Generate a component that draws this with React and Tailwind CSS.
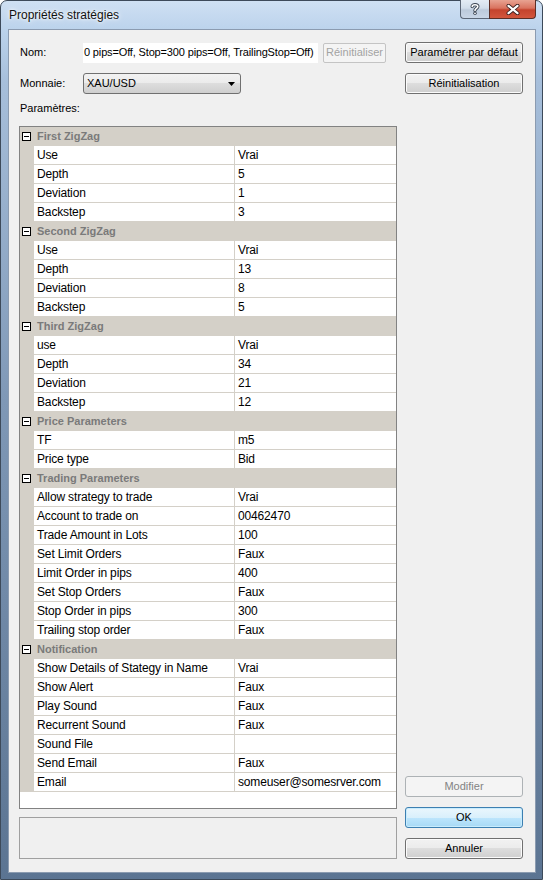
import React from 'react';

const groups = [
  { title: 'First ZigZag', rows: [['Use', 'Vrai'], ['Depth', '5'], ['Deviation', '1'], ['Backstep', '3']] },
  { title: 'Second ZigZag', rows: [['Use', 'Vrai'], ['Depth', '13'], ['Deviation', '8'], ['Backstep', '5']] },
  { title: 'Third ZigZag', rows: [['use', 'Vrai'], ['Depth', '34'], ['Deviation', '21'], ['Backstep', '12']] },
  { title: 'Price Parameters', rows: [['TF', 'm5'], ['Price type', 'Bid']] },
  {
    title: 'Trading Parameters',
    rows: [
      ['Allow strategy to trade', 'Vrai'],
      ['Account to trade on', '00462470'],
      ['Trade Amount in Lots', '100'],
      ['Set Limit Orders', 'Faux'],
      ['Limit Order in pips', '400'],
      ['Set Stop Orders', 'Faux'],
      ['Stop Order in pips', '300'],
      ['Trailing stop order', 'Faux'],
    ],
  },
  {
    title: 'Notification',
    rows: [
      ['Show Details of Stategy in Name', 'Vrai'],
      ['Show Alert', 'Faux'],
      ['Play Sound', 'Faux'],
      ['Recurrent Sound', 'Faux'],
      ['Sound File', ''],
      ['Send Email', 'Faux'],
      ['Email', 'someuser@somesrver.com'],
    ],
  },
];

const btn =
  'flex h-[21px] w-[118px] items-center justify-center rounded-[3px] border border-[#707070] bg-[linear-gradient(180deg,#f2f2f2_0%,#ebebeb_50%,#dddddd_50%,#cfcfcf_100%)] shadow-[inset_0_0_0_1px_#fbfbfb] text-black';

function MinusBox() {
  return (
    <div className="flex h-[9px] w-[9px] items-center justify-center border border-black bg-white">
      <div className="h-[1px] w-[5px] bg-black" />
    </div>
  );
}

function PropertyGrid() {
  return (
    <div className="h-[683px] w-[378px] overflow-hidden border border-[#828282] bg-white text-[12px] tracking-[-0.15px] text-black">
      {groups.map((g) => (
        <div key={g.title}>
          <div className="flex h-[19px] items-center bg-[#d4d0c8]">
            <div className="w-[14px] pl-[2px]">
              <MinusBox />
            </div>
            <span className="pl-[3px] text-[11px] font-bold tracking-normal text-[#7a7a7a]">{g.title}</span>
          </div>
          {g.rows.map(([k, v]) => (
            <div key={k} className="flex h-[19px]">
              <div className="w-[14px] shrink-0 bg-[#d4d0c8]" />
              <div className="flex w-[200px] shrink-0 items-center border-b border-[#d4d0c8] pl-[3px] whitespace-nowrap">{k}</div>
              <div className="flex flex-1 items-center border-b border-l border-[#d4d0c8] pl-[3px] whitespace-nowrap">{v}</div>
            </div>
          ))}
        </div>
      ))}
    </div>
  );
}

export default function App() {
  return (
    <div className="flex h-[880px] w-[543px] flex-col rounded-t-[7px] border border-[#3d4a5a] bg-[linear-gradient(180deg,#cfe0f3_0px,#bcd3ec_28px,#a7bfdb_80px,#7f98b6_400px,#5b7492_879px)] pb-[6px] pl-[7px] pr-[6px] font-['Liberation_Sans',Arial,sans-serif]">
      {/* title bar */}
      <div className="flex h-[28px] shrink-0 items-start justify-between">
        <span className="pl-[1px] pt-[7px] text-[12px] leading-[15px] text-[#111] [text-shadow:0_0_6px_#fff,0_0_3px_#fff]">
          Propriétés stratégies
        </span>
        <div className="-mt-[1px] flex">
          <div className="flex h-[19px] w-[29px] items-center justify-center rounded-bl-[4px] border border-r-0 border-t-0 border-[#5b6676] bg-[linear-gradient(180deg,#e4ecf5_0%,#d2deeb_45%,#bccadb_55%,#c9d6e6_100%)]">
            <svg width="10" height="12" viewBox="0 0 10 12">
              <path d="M2.2 3.6 C2.2 1.2 7.8 1.2 7.8 3.6 C7.8 5.4 5 5.4 5 7.4" fill="none" stroke="#3a4350" strokeWidth="3.4" strokeLinecap="round" />
              <path d="M2.2 3.6 C2.2 1.2 7.8 1.2 7.8 3.6 C7.8 5.4 5 5.4 5 7.4" fill="none" stroke="#fff" strokeWidth="1.6" strokeLinecap="round" />
              <circle cx="5" cy="10.3" r="1.7" fill="#3a4350" />
              <circle cx="5" cy="10.3" r="0.9" fill="#fff" />
            </svg>
          </div>
          <div className="flex h-[19px] w-[47px] items-center justify-center rounded-br-[4px] border border-t-0 border-[#5b2e26] bg-[linear-gradient(180deg,#e8a392_0%,#d9735f_45%,#c4432d_55%,#d2563d_100%)]">
            <svg width="14" height="11" viewBox="0 0 14 11">
              <path d="M2.5 1.8 L11.5 9.2 M11.5 1.8 L2.5 9.2" stroke="#3b2020" strokeWidth="4" strokeLinecap="round" />
              <path d="M2.5 1.8 L11.5 9.2 M11.5 1.8 L2.5 9.2" stroke="#fff" strokeWidth="2.2" strokeLinecap="round" />
            </svg>
          </div>
        </div>
      </div>

      {/* client area */}
      <div className="flex flex-1 flex-col border border-[#8b9bb0] bg-[#f0f0f0] pl-[10px] pt-[12px] text-[11px] text-black">
        <div className="flex h-[21px]">
          <div className="flex w-[378px] items-center">
            <span className="w-[64px] pl-[1px]">Nom:</span>
            <div className="flex h-[20px] w-[235px] items-center overflow-hidden whitespace-nowrap bg-white pl-[1px] tracking-[-0.15px]">
              0 pips=Off, Stop=300 pips=Off, TrailingStop=Off)
            </div>
            <div className="ml-[5px] flex h-[20px] w-[63px] items-center justify-center rounded-[2px] border border-[#c4c4c4] bg-[#f4f4f4] text-[#a3a3a3]">
              Réinitialiser
            </div>
          </div>
          <div className={`ml-[8px] ${btn}`}>Paramétrer par défaut</div>
        </div>

        <div className="mt-[10px] flex h-[21px]">
          <div className="flex w-[378px] items-center">
            <span className="w-[64px] pl-[1px]">Monnaie:</span>
            <div className="flex h-[21px] w-[158px] items-center justify-between rounded-[3px] border border-[#707070] bg-[linear-gradient(180deg,#f2f2f2_0%,#ebebeb_50%,#dddddd_50%,#cfcfcf_100%)] pl-[3px] pr-[5px]">
              <span>XAU/USD</span>
              <svg width="7" height="4" viewBox="0 0 7 4">
                <path d="M0 0 H7 L3.5 4 Z" fill="#000" />
              </svg>
            </div>
          </div>
          <div className={`ml-[8px] ${btn}`}>Réinitialisation</div>
        </div>

        <div className="mt-[8px] h-[13px] pl-[1px] leading-[13px]">Paramètres:</div>

        <div className="mt-[11px] flex">
          <div className="flex flex-col">
            <PropertyGrid />
            <div className="mt-[8px] h-[42px] w-[378px] border border-[#a0a0a0] bg-[#f0f0f0]" />
          </div>
          <div className="ml-[8px] flex flex-col justify-end gap-[10px] pb-[0px]">
            <div className="flex h-[21px] w-[118px] items-center justify-center rounded-[3px] border border-[#adb2b5] bg-[#f4f4f4] text-[#838383]">
              Modifier
            </div>
            <div className="flex h-[21px] w-[118px] items-center justify-center rounded-[3px] border border-[#3c7fb1] bg-[linear-gradient(180deg,#eaf6fd_0%,#d9f0fc_50%,#bee6fd_50%,#a7d9f5_100%)] shadow-[inset_0_0_0_1px_#c8ecfd]">
              OK
            </div>
            <div className={btn}>Annuler</div>
          </div>
        </div>
      </div>
    </div>
  );
}
